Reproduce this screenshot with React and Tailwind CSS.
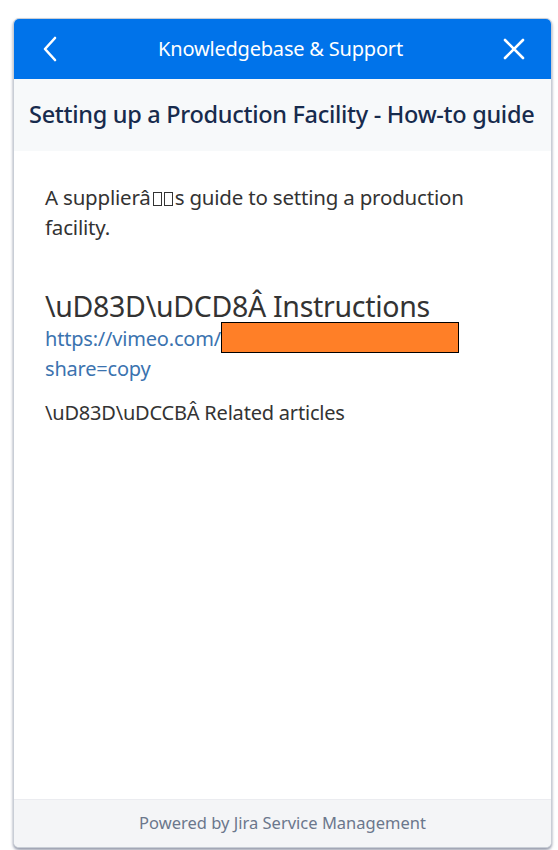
import React from "react";

const FONT = { fontFamily: '"Noto Sans", "Open Sans", sans-serif' };

function BackIcon() {
  return (
    <svg width="16" height="26" viewBox="0 0 16 26" fill="none">
      <path d="M13 2 L3 13 L13 24" stroke="white" strokeWidth="2.6" strokeLinecap="round" strokeLinejoin="round" />
    </svg>
  );
}

function CloseIcon() {
  return (
    <svg width="22" height="22" viewBox="0 0 22 22" fill="none">
      <path d="M2 2 L20 20 M20 2 L2 20" stroke="white" strokeWidth="2.6" strokeLinecap="round" />
    </svg>
  );
}

// missing-glyph box, as the browser draws it
function Tofu() {
  return <span className="inline-block w-[9px] h-[14px] border border-[#333333] ml-[2px] align-[-1px]"></span>;
}

export default function App() {
  return (
    <div className="w-[558px] h-[850px] bg-white pt-[18px] pl-[13px]" style={FONT}>
      <div className="w-[539px] h-[830px] flex flex-col rounded-[6px] border border-[#c9ced6] shadow-[0_2px_3px_rgba(60,70,100,0.55)] overflow-hidden bg-white">
        <div className="h-[60px] bg-[#0073ea] flex items-center justify-between px-[28px] shrink-0">
          <BackIcon />
          <span className="text-white text-[20px] tracking-[-0.2px]">Knowledgebase &amp; Support</span>
          <div className="-mr-[2px]">
            <CloseIcon />
          </div>
        </div>
        <div className="h-[72px] bg-[#f7f9fa] flex items-center px-[15px] shrink-0">
          <h1 className="text-[23.5px] font-medium text-[#172b4d] tracking-[-0.3px] whitespace-nowrap">
            Setting up a Production Facility - How-to guide
          </h1>
        </div>
        <div className="flex-1 px-[31px] pt-[31px] text-[#333333]">
          <p className="text-[20.5px] leading-[30px] tracking-[-0.2px]">
            <span>A supplierâ</span>
            <Tofu />
            <Tofu />
            <span className="ml-[2px]">s guide to setting a production facility.</span>
          </p>
          <h2 className="text-[28.5px] leading-[36px] mt-[46px] tracking-[-0.3px]">\uD83D\uDCD8Â Instructions</h2>
          <p className="text-[20px] leading-[30px] text-[#3b73af] tracking-[-0.2px]">
            https://vimeo.com/
            <span className="inline-block align-middle w-[238px] h-[31px] bg-[#ff7f27] border border-black -mt-[6px]"></span>
            <br />
            share=copy
          </p>
          <p className="text-[20px] leading-[30px] mt-[14px] tracking-[-0.2px]">\uD83D\uDCCBÂ Related articles</p>
        </div>
        <div className="h-[48px] bg-[#f4f5f7] border-t border-[#ebecf0] flex items-center justify-center shrink-0">
          <span className="text-[16.5px] text-[#6b778c]">Powered by Jira Service Management</span>
        </div>
      </div>
    </div>
  );
}
